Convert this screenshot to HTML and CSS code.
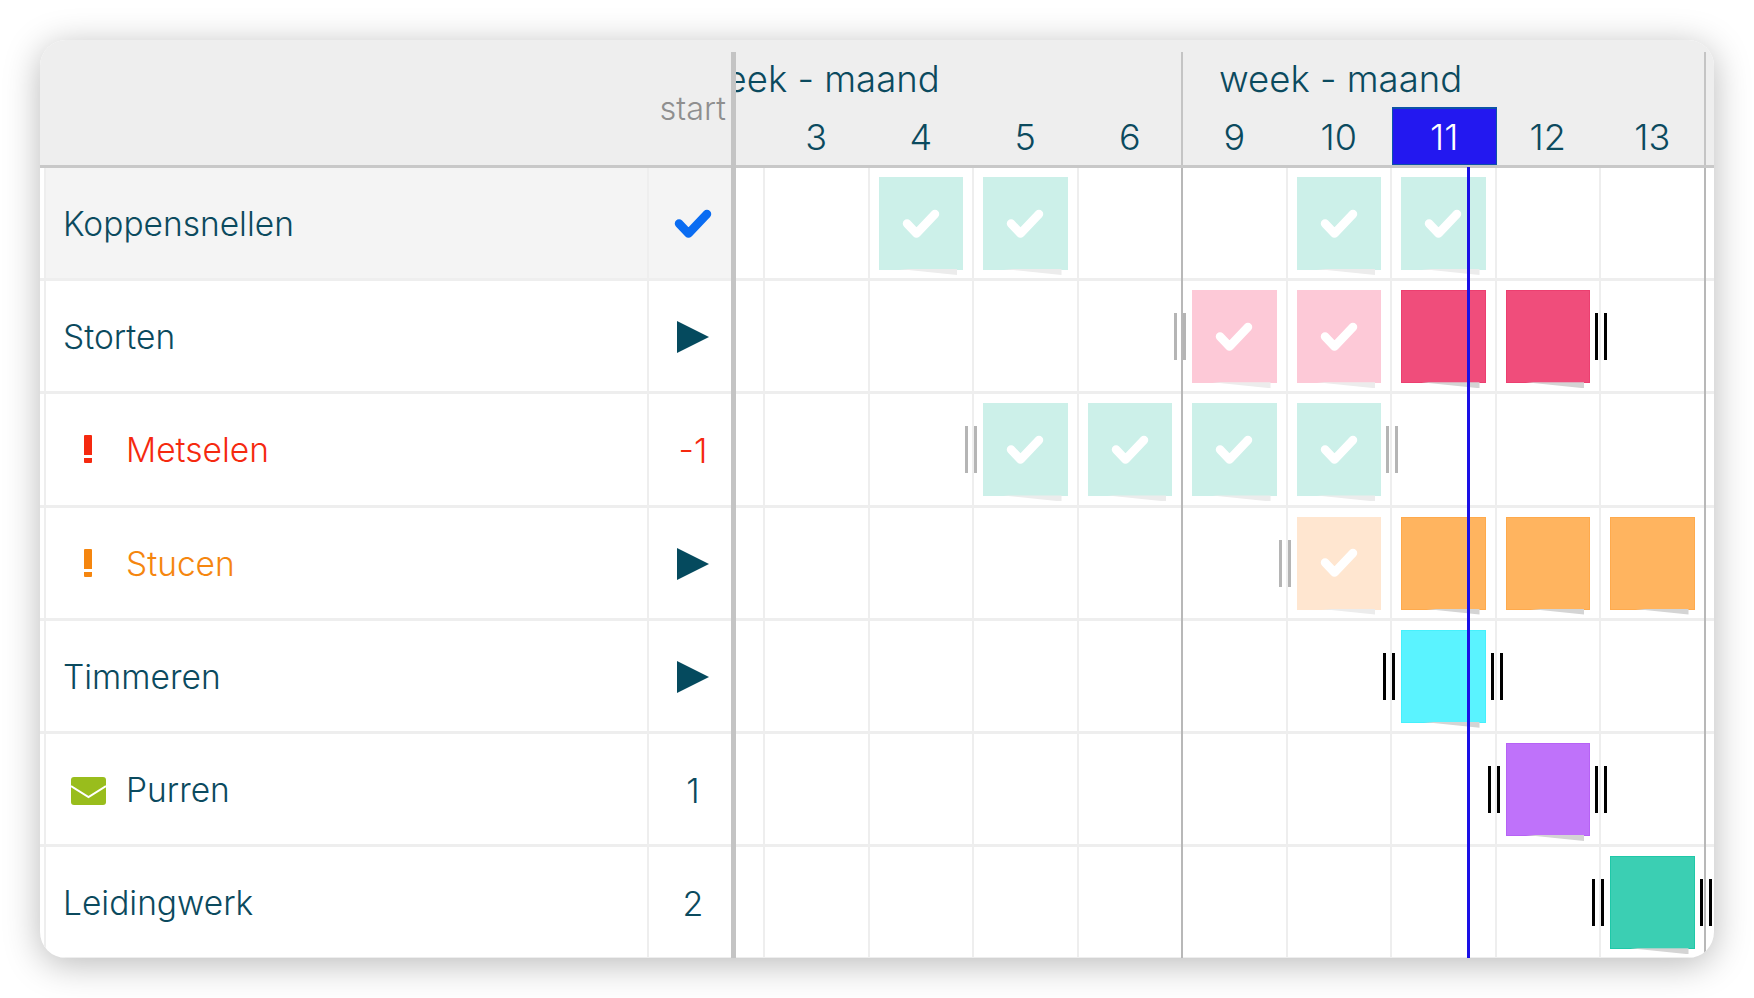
FILE: index.html
```html
<!DOCTYPE html>
<html lang="en">
<head>
    <meta charset="UTF-8">
    <link rel="stylesheet" href="styles.css">
    <title>Planning</title>
</head>
<body>
<svg class="defs" width="0" height="0">
    <symbol id="check" viewBox="0 0 38 30">
        <polyline points="5,14.5 14.5,24.5 33,5" fill="none" stroke="currentColor" stroke-width="8.5" stroke-linecap="round" stroke-linejoin="round"/>
    </symbol>
    <symbol id="play" viewBox="0 0 32 32">
        <polygon points="0,0 32,16 0,32" fill="currentColor"/>
    </symbol>
</svg>
<div class="card">
    <div class="taskPane">
        <div class="taskHead"><span class="startLabel">start</span></div>

        <div class="taskRow doneRow">
            <div class="taskName">Koppensnellen</div>
            <div class="taskStart"><svg class="checkIcon blue"><use href="#check"/></svg></div>
        </div>
        <div class="taskRow">
            <div class="taskName">Storten</div>
            <div class="taskStart"><svg class="playIcon"><use href="#play"/></svg></div>
        </div>
        <div class="taskRow red">
            <div class="taskName"><span class="slot"><span class="alert"></span></span>Metselen</div>
            <div class="taskStart">-1</div>
        </div>
        <div class="taskRow orange">
            <div class="taskName"><span class="slot"><span class="alert"></span></span>Stucen</div>
            <div class="taskStart"><svg class="playIcon"><use href="#play"/></svg></div>
        </div>
        <div class="taskRow">
            <div class="taskName">Timmeren</div>
            <div class="taskStart"><svg class="playIcon"><use href="#play"/></svg></div>
        </div>
        <div class="taskRow">
            <div class="taskName">
                <span class="slot">
                    <svg class="mail" viewBox="0 0 35 28">
                        <rect width="35" height="28" rx="3" fill="#99bd1c"/>
                        <polyline points="0,9 17.5,20 35,9" fill="none" stroke="#fff" stroke-width="2"/>
                    </svg>
                </span>Purren
            </div>
            <div class="taskStart">1</div>
        </div>
        <div class="taskRow">
            <div class="taskName">Leidingwerk</div>
            <div class="taskStart">2</div>
        </div>
    </div>

    <div class="divider"></div>

    <div class="timePane">
        <div class="track">
            <div class="timeHead">
                <div class="month">
                    <div class="monthLabel">week - maand</div>
                    <div class="weeks">
                        <div class="week">2</div>
                        <div class="week">3</div>
                        <div class="week">4</div>
                        <div class="week">5</div>
                        <div class="week">6</div>
                    </div>
                </div>
                <div class="month">
                    <div class="monthLabel">week - maand</div>
                    <div class="weeks">
                        <div class="week">9</div>
                        <div class="week">10</div>
                        <div class="week current">11</div>
                        <div class="week">12</div>
                        <div class="week">13</div>
                    </div>
                </div>
            </div>

            <div class="timeRow">
                <div class="cell"></div>
                <div class="cell"></div>
                <div class="cell"><div class="block teal"><svg class="checkIcon"><use href="#check"/></svg></div></div>
                <div class="cell"><div class="block teal"><svg class="checkIcon"><use href="#check"/></svg></div></div>
                <div class="cell end"></div>
                <div class="cell"></div>
                <div class="cell"><div class="block teal"><svg class="checkIcon"><use href="#check"/></svg></div></div>
                <div class="cell"><div class="block teal"><svg class="checkIcon"><use href="#check"/></svg></div></div>
                <div class="cell"></div>
                <div class="cell end"></div>
            </div>
            <div class="timeRow">
                <div class="cell"></div>
                <div class="cell"></div>
                <div class="cell"></div>
                <div class="cell"></div>
                <div class="cell end"></div>
                <div class="cell"><div class="block pink"><i class="handle before past"></i><svg class="checkIcon"><use href="#check"/></svg></div></div>
                <div class="cell"><div class="block pink"><svg class="checkIcon"><use href="#check"/></svg></div></div>
                <div class="cell"><div class="block rose"></div></div>
                <div class="cell"><div class="block rose"><i class="handle after"></i></div></div>
                <div class="cell end"></div>
            </div>
            <div class="timeRow">
                <div class="cell"></div>
                <div class="cell"></div>
                <div class="cell"></div>
                <div class="cell"><div class="block teal"><i class="handle before past"></i><svg class="checkIcon"><use href="#check"/></svg></div></div>
                <div class="cell end"><div class="block teal"><svg class="checkIcon"><use href="#check"/></svg></div></div>
                <div class="cell"><div class="block teal"><svg class="checkIcon"><use href="#check"/></svg></div></div>
                <div class="cell"><div class="block teal"><i class="handle after past"></i><svg class="checkIcon"><use href="#check"/></svg></div></div>
                <div class="cell"></div>
                <div class="cell"></div>
                <div class="cell end"></div>
            </div>
            <div class="timeRow">
                <div class="cell"></div>
                <div class="cell"></div>
                <div class="cell"></div>
                <div class="cell"></div>
                <div class="cell end"></div>
                <div class="cell"></div>
                <div class="cell"><div class="block peach"><i class="handle before past"></i><svg class="checkIcon"><use href="#check"/></svg></div></div>
                <div class="cell"><div class="block amber"></div></div>
                <div class="cell"><div class="block amber"></div></div>
                <div class="cell end"><div class="block amber"></div></div>
            </div>
            <div class="timeRow">
                <div class="cell"></div>
                <div class="cell"></div>
                <div class="cell"></div>
                <div class="cell"></div>
                <div class="cell end"></div>
                <div class="cell"></div>
                <div class="cell"></div>
                <div class="cell"><div class="block cyan"><i class="handle before"></i><i class="handle after"></i></div></div>
                <div class="cell"></div>
                <div class="cell end"></div>
            </div>
            <div class="timeRow">
                <div class="cell"></div>
                <div class="cell"></div>
                <div class="cell"></div>
                <div class="cell"></div>
                <div class="cell end"></div>
                <div class="cell"></div>
                <div class="cell"></div>
                <div class="cell"></div>
                <div class="cell"><div class="block purple"><i class="handle before"></i><i class="handle after"></i></div></div>
                <div class="cell end"></div>
            </div>
            <div class="timeRow">
                <div class="cell"></div>
                <div class="cell"></div>
                <div class="cell"></div>
                <div class="cell"></div>
                <div class="cell end"></div>
                <div class="cell"></div>
                <div class="cell"></div>
                <div class="cell"></div>
                <div class="cell"></div>
                <div class="cell end"><div class="block green"><i class="handle before"></i><i class="handle after"></i></div></div>
            </div>
        </div>
        <div class="today"></div>
    </div>
</div>
</body>
</html>
```

FILE: styles.css
```css
* {
    box-sizing: border-box;
}

body {
    margin: 0;
    height: 998px;
    padding: 40px;
    background: #fff;
    font-family: "Inter", sans-serif;
    font-weight: 300;
    color: #0b4a5e;
    overflow: hidden;
}

.defs {
    display: block;
    height: 0;
}

.card {
    display: flex;
    height: 918px;
    background: #fff;
    border-radius: 26px;
    overflow: hidden;
    box-shadow: 0 6px 36px rgba(0, 0, 0, 0.28);
}

.taskPane {
    width: 691px;
    flex: none;
}

.taskHead {
    height: 128px;
    padding: 49px 5px 0 0;
    text-align: right;
    background: #eee;
    border-bottom: 3px solid #c8c8c8;
}

.startLabel {
    font-size: 32.5px;
    line-height: 40px;
    color: #8f8f8f;
}

.taskRow {
    display: flex;
    height: 113.2px;
    padding-left: 4px;
    font-size: 33.5px;
    border-bottom: 3px solid #eee;
}

.doneRow .taskName,
.doneRow .taskStart {
    background: #f4f4f4;
}

.red {
    color: #f5290f;
}

.orange {
    color: #f5860f;
}

.taskName {
    flex: 1;
    display: flex;
    align-items: center;
    padding: 2px 0 0 17px;
    border-left: 2px solid #eee;
}

.taskStart {
    flex: none;
    width: 84px;
    display: flex;
    align-items: center;
    justify-content: center;
    padding: 2px 0 0 6px;
    font-size: 34px;
    border-left: 2px solid #eee;
}

.slot {
    width: 50px;
    margin-right: 13px;
    display: flex;
    justify-content: center;
}

.alert {
    display: block;
    width: 8px;
    height: 28px;
    margin-top: -2px;
    background: linear-gradient(currentColor 0 20px, transparent 20px 23px, currentColor 23px);
    border-radius: 1px;
}

.mail {
    width: 35px;
    height: 28px;
    margin-top: 1px;
}

.checkIcon {
    width: 38px;
    height: 30px;
    color: #fff;
}

.checkIcon.blue {
    color: #0a6cf2;
}

.playIcon {
    width: 32px;
    height: 32px;
    color: #054a5e;
}

.divider {
    flex: none;
    width: 5px;
    background: #c4c4c4;
    border-top: 12px solid #eee;
}

.timePane {
    flex: 1;
    position: relative;
    overflow: hidden;
}

.track {
    width: 1100px;
    margin-left: -75.5px;
}

.timeHead {
    display: flex;
    height: 128px;
    padding-top: 12px;
    background: #eee;
    border-bottom: 3px solid #c8c8c8;
}

.month {
    position: relative;
    width: 522.5px;
    flex: none;
}

.month::after {
    content: "";
    position: absolute;
    top: 0;
    right: 0;
    bottom: 0;
    width: 2px;
    background: #c4c4c4;
}

.monthLabel {
    height: 55px;
    padding-left: 36px;
    font-size: 36.5px;
    line-height: 54px;
    white-space: nowrap;
}

.weeks {
    display: flex;
}

.week {
    width: 104.5px;
    height: 58px;
    padding-right: 2px;
    font-size: 36px;
    line-height: 60px;
    text-align: center;
}

.week.current {
    padding-right: 0;
    color: #fff;
    background: #2318f0;
    border: 1px solid #0d52a8;
    border-top-width: 2px;
    line-height: 57px;
}

.timeRow {
    display: flex;
    height: 113.2px;
    border-bottom: 3px solid #eee;
}

.cell {
    position: relative;
    flex: none;
    width: 104.5px;
    padding: 9px 0 0 9px;
    border-right: 2px solid #eee;
}

.cell.end::after {
    content: "";
    position: absolute;
    top: 0;
    right: -2px;
    bottom: -3px;
    width: 2px;
    background: #b8b8b8;
}

.block {
    position: relative;
    width: 84.5px;
    height: 93px;
    display: flex;
    align-items: center;
    justify-content: center;
    border: 1px solid transparent;
}

.block::after {
    content: "";
    position: absolute;
    top: 100%;
    left: 0;
    right: 5px;
    height: 6px;
    background: #d4d4d4;
    clip-path: polygon(25% 0, 100% 0, 100% 100%);
}

.teal { background: #ccf0e9; }
.pink { background: #fdc9d7; }
.peach { background: #ffe6d0; }
.teal::after, .pink::after, .peach::after { background: #ececec; }
.rose { background: #f04d7b; border-color: #ec3f70; }
.amber { background: #ffb45f; border-color: #ffaa4c; }
.cyan { background: #5af3ff; border-color: #46f0fc; }
.purple { background: #bf72fa; border-color: #b662f5; }
.green { background: #3bcfb3; border-color: #1fc8a8; }

.handle {
    position: absolute;
    top: 22px;
    width: 12px;
    height: 47px;
    border-left: 3px solid #000;
    border-right: 3px solid #000;
}

.handle.before {
    left: -19px;
}

.handle.after {
    right: -18px;
}

.handle.past {
    border-color: #b5b5b5;
}

.today {
    position: absolute;
    top: 127px;
    bottom: 0;
    left: 731px;
    width: 3px;
    background: #1a10e6;
}
```
